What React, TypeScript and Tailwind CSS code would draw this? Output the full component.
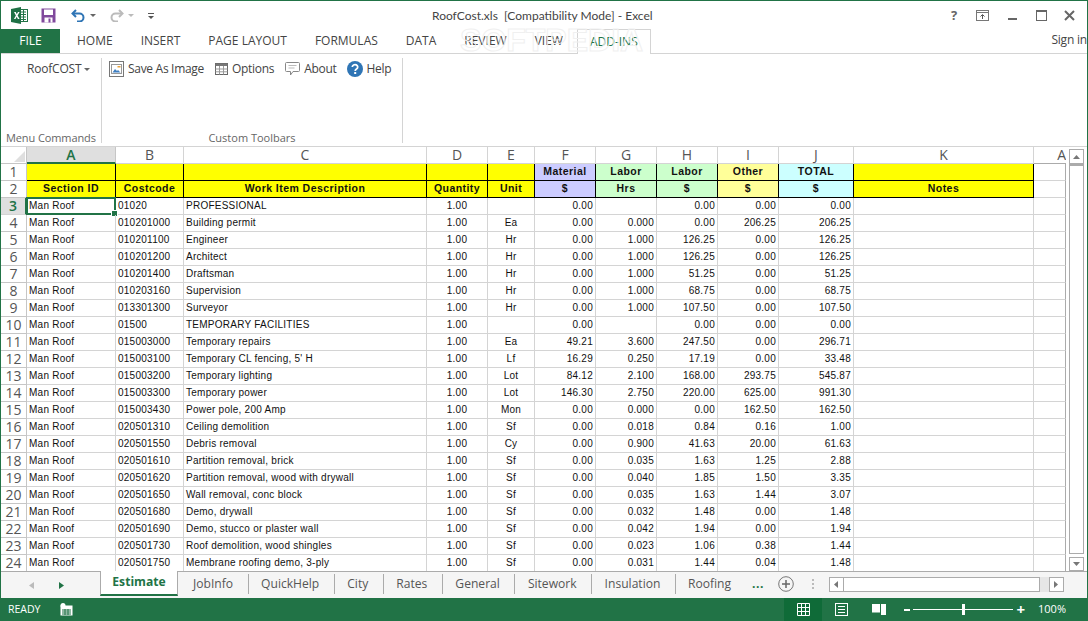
import React from "react";

const GRID_COLS =
  "grid grid-rows-[17px] grid-cols-[26px_89px_68px_243px_61px_47px_61px_61px_61px_61px_75px_180px_32px]";
const UI_FONT = "font-['Open_Sans',sans-serif]";
const CELL_FONT = "font-['Liberation_Sans',sans-serif]";

type Row = [string, string, string, string, string, string, string, string, string];

const ROWS: Row[] = [
  ["01020", "PROFESSIONAL", "", "0.00", "", "0.00", "0.00", "0.00", ""],
  ["010201000", "Building permit", "Ea", "0.00", "0.000", "0.00", "206.25", "206.25", ""],
  ["010201100", "Engineer", "Hr", "0.00", "1.000", "126.25", "0.00", "126.25", ""],
  ["010201200", "Architect", "Hr", "0.00", "1.000", "126.25", "0.00", "126.25", ""],
  ["010201400", "Draftsman", "Hr", "0.00", "1.000", "51.25", "0.00", "51.25", ""],
  ["010203160", "Supervision", "Hr", "0.00", "1.000", "68.75", "0.00", "68.75", ""],
  ["013301300", "Surveyor", "Hr", "0.00", "1.000", "107.50", "0.00", "107.50", ""],
  ["01500", "TEMPORARY FACILITIES", "", "0.00", "", "0.00", "0.00", "0.00", ""],
  ["015003000", "Temporary repairs", "Ea", "49.21", "3.600", "247.50", "0.00", "296.71", ""],
  ["015003100", "Temporary CL fencing, 5' H", "Lf", "16.29", "0.250", "17.19", "0.00", "33.48", ""],
  ["015003200", "Temporary lighting", "Lot", "84.12", "2.100", "168.00", "293.75", "545.87", ""],
  ["015003300", "Temporary power", "Lot", "146.30", "2.750", "220.00", "625.00", "991.30", ""],
  ["015003430", "Power pole, 200 Amp", "Mon", "0.00", "0.000", "0.00", "162.50", "162.50", ""],
  ["020501310", "Ceiling demolition", "Sf", "0.00", "0.018", "0.84", "0.16", "1.00", ""],
  ["020501550", "Debris removal", "Cy", "0.00", "0.900", "41.63", "20.00", "61.63", ""],
  ["020501610", "Partition removal, brick", "Sf", "0.00", "0.035", "1.63", "1.25", "2.88", ""],
  ["020501620", "Partition removal, wood with drywall", "Sf", "0.00", "0.040", "1.85", "1.50", "3.35", ""],
  ["020501650", "Wall removal, conc block", "Sf", "0.00", "0.035", "1.63", "1.44", "3.07", ""],
  ["020501680", "Demo, drywall", "Sf", "0.00", "0.032", "1.48", "0.00", "1.48", ""],
  ["020501690", "Demo, stucco or plaster wall", "Sf", "0.00", "0.042", "1.94", "0.00", "1.94", ""],
  ["020501730", "Roof demolition, wood shingles", "Sf", "0.00", "0.023", "1.06", "0.38", "1.44", ""],
  ["020501750", "Membrane roofing demo, 3-ply", "Sf", "0.00", "0.031", "1.44", "0.04", "1.48", ""],
];

const COLUMN_LETTERS = ["A", "B", "C", "D", "E", "F", "G", "H", "I", "J", "K"];

const HEADER_ONE = [
  ["", "bg-[#ffff00]"],
  ["", "bg-[#ffff00]"],
  ["", "bg-[#ffff00]"],
  ["", "bg-[#ffff00]"],
  ["", "bg-[#ffff00]"],
  ["Material", "bg-[#ccccff]"],
  ["Labor", "bg-[#ccffcc]"],
  ["Labor", "bg-[#ccffcc]"],
  ["Other", "bg-[#ffff99]"],
  ["TOTAL", "bg-[#ccffff]"],
  ["", "bg-[#ffff00]"],
];

const HEADER_TWO = [
  ["Section ID", "bg-[#ffff00]"],
  ["Costcode", "bg-[#ffff00]"],
  ["Work Item Description", "bg-[#ffff00]"],
  ["Quantity", "bg-[#ffff00]"],
  ["Unit", "bg-[#ffff00]"],
  ["$", "bg-[#ccccff]"],
  ["Hrs", "bg-[#ccffcc]"],
  ["$", "bg-[#ccffcc]"],
  ["$", "bg-[#ffff99]"],
  ["$", "bg-[#ccffff]"],
  ["Notes", "bg-[#ffff00]"],
];

const RIBBON_TABS = ["HOME", "INSERT", "PAGE LAYOUT", "FORMULAS", "DATA", "REVIEW", "VIEW"];
const SHEETS = ["JobInfo", "QuickHelp", "City", "Rates", "General", "Sitework", "Insulation"];

const ExcelLogo = () => (
  <svg width="17" height="17" viewBox="0 0 17 17">
    <rect x="8" y="2.500" width="8.500" height="12" fill="#fff" stroke="#217346" />
    <path d="M10 5h5M10 7.500h5M10 10h5M10 12.500h5M12.500 3v11" stroke="#217346" strokeWidth="1" />
    <path d="M0 2l10-2v17L0 15z" fill="#1e7145" />
    <path d="M3 5h1.800l1 2.200L7 5h1.600L6.600 8.500 8.600 12H6.900L5.700 9.700 4.500 12H2.900l2-3.500z" fill="#fff" />
  </svg>
);

const SaveIcon = () => (
  <svg width="15" height="15" viewBox="0 0 15 15">
    <path d="M0.500 0.500h14v14h-14z" fill="#80499c" />
    <rect x="3" y="1.500" width="9" height="5.500" fill="#fff" />
    <rect x="3.500" y="9.500" width="8" height="5" fill="#fff" />
    <rect x="7.500" y="10.500" width="2" height="4" fill="#80499c" />
  </svg>
);

const Undo = ({ color }: { color: string }) => (
  <svg width="15" height="13" viewBox="0 0 15 13" fill="none">
    <path d="M5 1L1.500 4.500 5 8" stroke={color} strokeWidth="2" />
    <path d="M2 4.500h6.500a4 4 0 0 1 0 8H6" stroke={color} strokeWidth="2" />
  </svg>
);

const Caret = ({ color = "#666" }: { color?: string }) => (
  <svg width="6" height="3" viewBox="0 0 6 3">
    <path d="M0 0h6L3 3z" fill={color} />
  </svg>
);

const SaveImageIcon = () => (
  <svg width="15" height="16" viewBox="0 0 15 16" fill="none">
    <rect x="0.500" y="0.500" width="14" height="15" fill="#fff" stroke="#777" />
    <rect x="2.500" y="3.500" width="10" height="9" fill="#fff" stroke="#999" />
    <path d="M3.500 11.500l2.500-3.500 2 2 1-1 2.500 2.500z" fill="#3f7fc1" />
    <rect x="8.500" y="5" width="3" height="1.500" fill="#e8a33d" />
  </svg>
);

const TableIcon = () => (
  <svg width="13" height="12" viewBox="0 0 13 12" fill="none">
    <rect x="0.500" y="0.500" width="12" height="11" fill="#fff" stroke="#666" />
    <rect x="0.500" y="0.500" width="12" height="2.500" fill="#777" />
    <path d="M0.500 6h12M0.500 8.800h12M4.500 3v8.500M8.500 3v8.500" stroke="#999" />
  </svg>
);

const CommentIcon = () => (
  <svg width="15" height="15" viewBox="0 0 15 15" fill="none">
    <path d="M1.500 0.500h12a1 1 0 0 1 1 1v7a1 1 0 0 1-1 1H8l-2.500 3.500v-3.500h-4a1 1 0 0 1-1-1v-7a1 1 0 0 1 1-1z" stroke="#888" />
    <path d="M3.500 3.500h8M3.500 6h6" stroke="#bbb" />
  </svg>
);

const HelpIcon = () => (
  <svg width="16" height="16" viewBox="0 0 16 16">
    <circle cx="8" cy="8" r="8" fill="#2f75b5" />
    <path d="M5.300 6a2.700 2.400 0 1 1 4.200 2c-.9.600-1.300 1-1.300 2" fill="none" stroke="#fff" strokeWidth="1.800" />
    <rect x="7.200" y="11" width="2" height="2" fill="#fff" />
  </svg>
);

const RibbonButton = ({ icon, label, className }: { icon: React.ReactNode; label: string; className: string }) => (
  <div className={`flex items-center gap-[4px] ${className}`}>
    {icon}
    <span className="text-[12px] tracking-[-0.3px] text-[#444]">{label}</span>
  </div>
);

const TitleBar = () => (
  <div className="flex h-[28px] items-center pt-[1px]">
    <div className="flex items-center ml-[10px]">
      <ExcelLogo />
      <div className="ml-[13px]">
        <SaveIcon />
      </div>
      <div className="ml-[15px]">
        <Undo color="#2f75b5" />
      </div>
      <div className="ml-[4px]">
        <Caret />
      </div>
      <div className="ml-[13px] -scale-x-100">
        <Undo color="#bbbbbb" />
      </div>
      <div className="ml-[4px]">
        <Caret color="#bbb" />
      </div>
      <div className="ml-[14px] flex flex-col items-center gap-[2px]">
        <div className="w-[6px] h-px bg-[#555]" />
        <Caret color="#555" />
      </div>
    </div>
    <div className="ml-[278px] text-[12px] text-[#444] whitespace-pre font-['Lato',sans-serif]">RoofCost.xls  [Compatibility Mode] - Excel</div>
    <div className="ml-auto mr-[6px] flex items-center text-[#666]">
      <span className="text-[13px] font-bold w-[20px] text-center">?</span>
      <svg className="ml-[12px]" width="13" height="11" viewBox="0 0 13 11" fill="none">
        <rect x="0.500" y="0.500" width="12" height="10" stroke="#777" />
        <path d="M0.500 2.500h12" stroke="#777" />
        <path d="M6.500 9V5M4.500 6.500l2-2 2 2" stroke="#555" />
      </svg>
      <div className="ml-[19px] w-[9px] h-[2px] bg-[#666] mt-[7px]" />
      <div className="ml-[19px] w-[11px] h-[11px] border border-[#666] border-t-2" />
      <svg className="ml-[17px] mr-[6px]" width="11" height="11" viewBox="0 0 11 11">
        <path d="M1 1l9 9M10 1l-9 9" stroke="#666" strokeWidth="2" />
      </svg>
    </div>
  </div>
);

const TabBar = () => (
  <div className="relative flex h-[25px] border-b border-[#d4d4d4] text-[12px] text-[#444]">
    <div className="w-[59px] bg-[#217346] text-white flex items-center justify-center">FILE</div>
    <div className="flex items-center ml-[3px]">
      {RIBBON_TABS.map((tab) => (
        <span key={tab} className="px-[14px]">
          {tab}
        </span>
      ))}
    </div>
    <div className="h-[25px] -mb-px px-[12px] bg-white border border-b-0 border-[#d4d4d4] text-[#217346] flex items-center">
      ADD-INS
    </div>
    <div className="ml-auto mt-[2px] text-[12px] tracking-[-0.2px]">Sign in</div>
    {/* watermark over the tabs */}
    <div className="absolute left-[459px] top-[-5px] text-[32px] leading-none font-bold text-transparent [-webkit-text-stroke:1px_#f0f0f0] font-['Liberation_Sans',sans-serif]">
      SOFTPEDIA
    </div>
  </div>
);

const Ribbon = () => (
  <div className="flex h-[93px] border-b border-[#d4d4d4] text-[#444]">
    <div className="w-[101px] flex flex-col border-r border-[#d4d4d4] mt-[4px] mb-[3px]">
      <div className="flex items-center gap-[3px] pl-[26px] mt-[2px]">
        <span className="text-[12px] tracking-[-0.2px]">RoofCOST</span>
        <Caret />
      </div>
      <div className="mt-auto pl-[5px] text-[11px] leading-[10px] tracking-[-0.1px] text-[#666] whitespace-nowrap">Menu Commands</div>
    </div>
    <div className="w-[301px] flex flex-col border-r border-[#d4d4d4] mt-[4px] mb-[3px]">
      <div className="flex items-center mt-[2px] pl-[7px]">
        <RibbonButton icon={<SaveImageIcon />} label="Save As Image" className="" />
        <RibbonButton icon={<TableIcon />} label="Options" className="ml-[11px]" />
        <RibbonButton icon={<CommentIcon />} label="About" className="ml-[11px]" />
        <RibbonButton icon={<HelpIcon />} label="Help" className="ml-[10px]" />
      </div>
      <div className="mt-auto text-center text-[11px] leading-[10px] text-[#666]">Custom Toolbars</div>
    </div>
  </div>
);

const ColumnHeader = () => (
  <div className={`${GRID_COLS} bg-white ${UI_FONT} leading-none`}>
    <div className="relative border-r border-b border-[#c6c6c6]">
      <svg className="absolute right-[1px] bottom-[1px]" width="11" height="11" viewBox="0 0 11 11">
        <path d="M11 0v11H0z" fill="#dfdfdf" />
      </svg>
    </div>
    {COLUMN_LETTERS.map((letter, idx) => (
      <div
        key={idx}
        className={
          idx === 0
            ? "flex items-center justify-center text-[14px] font-semibold text-[#217346] bg-[#dfdfdf] border-b-2 border-b-[#217346] border-r border-r-[#c6c6c6]"
            : "flex items-center justify-center text-[14px] text-[#555] border-r border-b border-[#d4d4d4]"
        }
      >
        {letter}
      </div>
    ))}
    <div className="flex items-center justify-end text-[14px] text-[#555] border-b border-[#ababab]">A</div>
  </div>
);

const RowNumber = ({ n, active }: { n: number; active?: boolean }) => (
  <div
    className={
      active
        ? `flex items-center justify-center text-[14px] leading-none font-semibold text-[#217346] bg-[#dfdfdf] border-r-2 border-b border-r-[#217346] border-b-[#d4d4d4] ${UI_FONT}`
        : `flex items-center justify-center text-[14px] leading-none text-[#555] border-r border-b border-[#c6c6c6] ${UI_FONT}`
    }
  >
    {n}
  </div>
);

const HeaderRow = ({ n, cells }: { n: number; cells: string[][] }) => (
  <div className={GRID_COLS}>
    <RowNumber n={n} />
    {cells.map(([text, bg], idx) => (
      <div
        key={idx}
        className={`flex items-center justify-center pb-[2px] border-r border-b border-black text-[10.500px] leading-none font-bold text-[#111] tracking-[0.45px] ${bg} ${CELL_FONT}`}
      >
        {text}
      </div>
    ))}
    <div className="border-b border-b-[#d4d4d4] border-r border-r-[#ababab]" />
  </div>
);

const cellLine = "flex items-center border-r border-b border-[#d4d4d4] text-[10px] leading-none text-[#111] tracking-[0.25px] whitespace-nowrap";

const DataRow = ({ n, row }: { n: number; row: Row }) => {
  const [code, desc, unit, material, hours, labor, other, total, notes] = row;
  const active = n === 3;
  return (
    <div className={`${GRID_COLS} ${CELL_FONT}`}>
      <RowNumber n={n} active={active} />
      <div className={`${cellLine} pl-[2px] relative`}>
        Man Roof
        {active && (
          <div className="absolute -left-px -top-px right-[-1px] bottom-[-1px] border-2 border-[#217346]">
            <div className="absolute right-[-4px] bottom-[-4px] w-[5px] h-[5px] bg-[#217346] border border-white box-content" />
          </div>
        )}
      </div>
      <div className={`${cellLine} pl-[2px]`}>{code}</div>
      <div className={`${cellLine} pl-[2px]`}>{desc}</div>
      <div className={`${cellLine} justify-center`}>1.00</div>
      <div className={`${cellLine} justify-center`}>{unit}</div>
      {[material, hours, labor, other, total].map((value, idx) => (
        <div key={idx} className={`${cellLine} justify-end pr-[2px]`}>
          {value}
        </div>
      ))}
      <div className={cellLine}>{notes}</div>
      <div className="border-b border-b-[#d4d4d4] border-r border-r-[#ababab]" />
    </div>
  );
};

const VerticalScrollbar = () => (
  <div className="w-[21px] px-[3px] flex">
    <div className="w-[15px] flex flex-col">
      <div className="h-[15px] bg-white border border-[#ababab] flex items-center justify-center mt-[2px]">
        <svg width="7" height="4" viewBox="0 0 7 4">
          <path d="M3.500 0L7 4H0z" fill="#777" />
        </svg>
      </div>
      <div className="flex-1 bg-white border border-t-2 border-[#ababab] mb-[3px]" />
      <div className="h-[14px] bg-white border border-[#ababab] flex items-center justify-center">
        <svg width="7" height="4" viewBox="0 0 7 4">
          <path d="M0 0h7L3.500 4z" fill="#777" />
        </svg>
      </div>
    </div>
  </div>
);

const SheetTabs = () => (
  <div className={`flex h-[27px] bg-[#f5f5f5] border-t border-[#ababab] text-[12.100px] text-[#555] ${UI_FONT}`}>
    <div className="w-[99px] flex items-center">
      <svg className="ml-[28px]" width="5" height="7" viewBox="0 0 5 7">
        <path d="M5 0v7L0 3.500z" fill="#bbb" />
      </svg>
      <svg className="ml-[25px]" width="5" height="7" viewBox="0 0 5 7">
        <path d="M0 0v7l5-3.500z" fill="#217346" />
      </svg>
    </div>
    <div className="-mt-px h-[25px] w-[78px] bg-white border-l border-r border-[#ababab] border-b-2 border-b-[#217346] flex items-center justify-center font-bold text-[#217346]">
      Estimate
    </div>
    <div className="flex ml-[2.500px]">
      {SHEETS.map((sheet) => (
        <div key={sheet} className="flex items-center h-[24px]">
          <span className="pl-[12.500px] pr-[14.500px]">{sheet}</span>
          <div className="w-px h-[20px] bg-[#ababab]" />
        </div>
      ))}
    </div>
    <div className="flex items-center h-[24px] pl-[12px]">
      <span>Roofing</span>
      <span className="ml-[21px] font-bold text-[#217346] tracking-[0.5px]">...</span>
      <svg className="ml-[14px]" width="16" height="16" viewBox="0 0 16 16" fill="none">
        <circle cx="8" cy="8" r="7.300" stroke="#777" />
        <path d="M4 8h8M8 4v8" stroke="#666" strokeWidth="1.500" />
      </svg>
      <div className="ml-[18px] flex flex-col gap-[2px]">
        <div className="w-[2px] h-[2px] bg-[#bbb]" />
        <div className="w-[2px] h-[2px] bg-[#bbb]" />
        <div className="w-[2px] h-[2px] bg-[#bbb]" />
      </div>
      <div className="ml-[15px] w-[235px] h-[15px] flex bg-[#e6e6e6]">
        <div className="w-[15px] bg-white border border-[#ababab] flex items-center justify-center">
          <svg width="4" height="7" viewBox="0 0 4 7">
            <path d="M4 0v7L0 3.500z" fill="#777" />
          </svg>
        </div>
        <div className="w-[196px] bg-white border-y border-r border-[#ababab]" />
        <div className="ml-auto w-[15px] bg-white border border-[#ababab] flex items-center justify-center">
          <svg width="4" height="7" viewBox="0 0 4 7">
            <path d="M0 0v7l4-3.500z" fill="#777" />
          </svg>
        </div>
      </div>
    </div>
  </div>
);

const StatusBar = () => (
  <div className={`flex items-center h-[23px] bg-[#217346] text-white text-[10.500px] ${UI_FONT}`}>
    <span className="ml-[7px]">READY</span>
    <svg className="ml-[20px]" width="13" height="13" viewBox="0 0 13 13" fill="none">
      <rect x="0.500" y="2.500" width="12" height="10" fill="#fff" />
      <circle cx="3" cy="2.500" r="2.500" fill="#fff" />
      <path d="M2 7h9M2 9h9M2 11h9M5 6v6M8 6v6" stroke="#217346" />
    </svg>
    <div className="ml-auto flex items-center h-full">
      <div className="w-[38px] h-full bg-[#0f6b38] flex items-center justify-center">
        <svg width="13" height="13" viewBox="0 0 13 13" fill="none">
          <path d="M.500.500h12v12H.500zM.500 4.500h12M.500 8.500h12M4.500.500v12M8.500.500v12" stroke="#fff" />
        </svg>
      </div>
      <div className="w-[38px] flex items-center justify-center">
        <svg width="13" height="13" viewBox="0 0 13 13" fill="none">
          <rect x="0.500" y="0.500" width="12" height="12" stroke="#fff" />
          <path d="M3 3.500h7M3 6.500h7M3 9.500h7" stroke="#fff" />
        </svg>
      </div>
      <div className="w-[38px] flex items-center justify-center">
        <svg width="14" height="12" viewBox="0 0 14 12">
          <path d="M0 0h8v8H0zM9 0h5v11H9z" fill="#fff" />
          <path d="M0 8.500h8" stroke="#fff" strokeOpacity="0.500" />
        </svg>
      </div>
      <div className="ml-[6px] w-[6px] h-[2px] bg-white" />
      <div className="relative ml-[3px] w-[100px] h-px bg-white">
        <div className="absolute left-[49px] -top-[5px] w-[3px] h-[11px] bg-white" />
      </div>
      <span className="ml-[3px] text-[15px] font-bold leading-none">+</span>
      <span className="ml-[13px] mr-[21px] text-[11px]">100%</span>
    </div>
  </div>
);

const App: React.FC = () => {
  return (
    <div className={`w-[1088px] h-[621px] flex flex-col bg-white overflow-hidden border-x border-t border-[#217346] ${UI_FONT}`}>
      <TitleBar />
      <TabBar />
      <Ribbon />
      <div className="flex h-[424px] overflow-hidden">
        <div className="w-[1065px] overflow-hidden">
          <ColumnHeader />
          <HeaderRow n={1} cells={HEADER_ONE} />
          <HeaderRow n={2} cells={HEADER_TWO} />
          {ROWS.map((row, idx) => (
            <DataRow key={idx} n={idx + 3} row={row} />
          ))}
        </div>
        <VerticalScrollbar />
      </div>
      <SheetTabs />
      <StatusBar />
    </div>
  );
};

export default App;
